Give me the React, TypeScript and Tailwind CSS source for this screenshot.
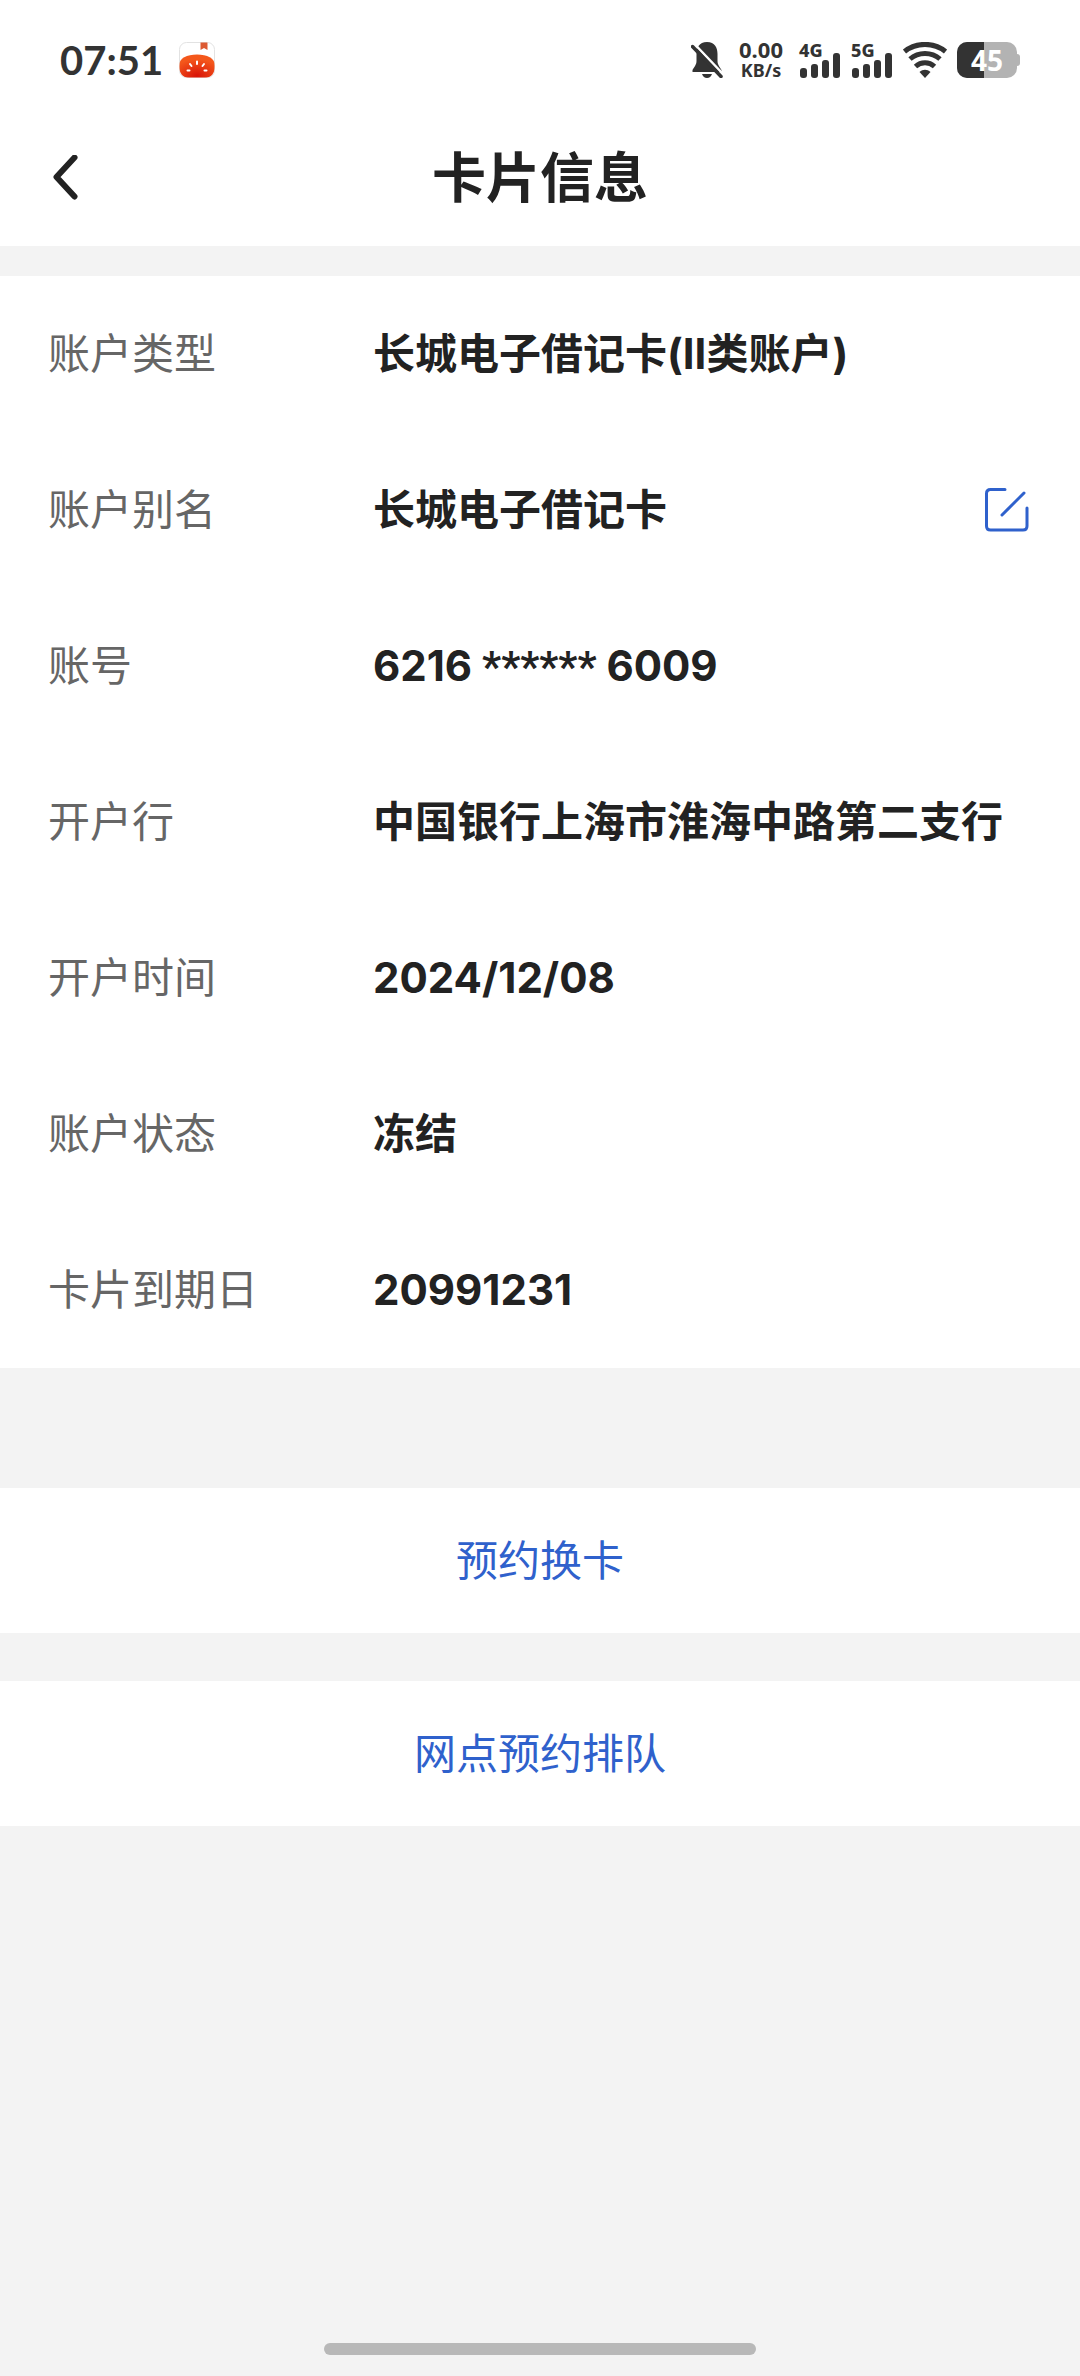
import React from 'react';

interface InfoRow {
  label: string;
  value: React.ReactNode;
  editable?: boolean;
}

const rows: InfoRow[] = [
  { label: '账户类型', value: '长城电子借记卡(II类账户)' },
  { label: '账户别名', value: '长城电子借记卡', editable: true },
  {
    label: '账号',
    value: (
      <span>
        6216 <span className="font-['Roboto',sans-serif] leading-none">******</span> 6009
      </span>
    ),
  },
  { label: '开户行', value: '中国银行上海市淮海中路第二支行' },
  { label: '开户时间', value: '2024/12/08' },
  { label: '账户状态', value: '冻结' },
  { label: '卡片到期日', value: '20991231' },
];

const TomatoIcon: React.FC = () => (
  <svg className="w-9 h-9" viewBox="0 0 36 36">
    <defs>
      <clipPath id="tomato-clip">
        <rect x="0.5" y="0.5" width="35" height="35" rx="7" />
      </clipPath>
      <radialGradient id="tomato-fill" cx="0.5" cy="0.9" r="0.7">
        <stop offset="0" stopColor="#d81408" />
        <stop offset="1" stopColor="#f4571b" />
      </radialGradient>
    </defs>
    <rect x="0.5" y="0.5" width="35" height="35" rx="7" fill="#fff" stroke="#e2e2e2" />
    <g clipPath="url(#tomato-clip)">
      <path d="M0 24 C0 16 8 12.500 18 12.500 S36 16 36 24 C36 31 32 36 26 36 H10 C4 36 0 31 0 24Z" fill="url(#tomato-fill)" />
      <path d="M21.500 0 h7 v8 l-3.500 -2 l-3.500 2z" fill="#dc5a32" />
    </g>
    <path
      d="M18 19.500 v2.500 M11 22 l1.500 2 M25 22 l-1.500 2 M8.500 28.500 h2 M25.500 28.500 h2"
      stroke="#fff"
      strokeWidth="2"
      strokeLinecap="round"
    />
  </svg>
);

const BellOffIcon: React.FC = () => (
  <svg className="w-8 h-9" viewBox="0 0 32 36" fill="#333">
    <path d="M16 0 C8 0 5.500 6 5.500 12 V19 C5.500 23 3 25 1.500 28 V30 H30.500 V28 C29 25 26.500 23 26.500 19 V12 C26.500 6 24 0 16 0Z" />
    <path d="M11 32 H21 C20 34.500 18.500 36 16 36 S12 34.500 11 32Z" />
    <path d="M3.500 2 L33 33" stroke="#fff" strokeWidth="2.500" />
    <path d="M1.500 4.500 L30 34.500" stroke="#333" strokeWidth="3.500" strokeLinecap="round" />
  </svg>
);

const SignalIcon: React.FC<{ network: string }> = ({ network }) => (
  <div className="relative w-[42px] h-9">
    <span className="absolute left-0 top-0 text-lg leading-4 font-extrabold">{network}</span>
    <svg className="w-full h-full" viewBox="0 0 42 36" fill="#333">
      <rect x="1" y="26" width="7" height="10" rx="3" />
      <rect x="12" y="22" width="7" height="14" rx="3" />
      <rect x="23" y="18" width="7" height="18" rx="3" />
      <rect x="34" y="11" width="7" height="25" rx="3" />
    </svg>
  </div>
);

const WifiIcon: React.FC = () => (
  <svg className="w-11 h-9" viewBox="0 0 44 36" fill="none" stroke="#333" strokeWidth="5">
    <path d="M1.500 9.500 C13 0 31 0 42.500 9.500" />
    <path d="M7 17 C15.500 9.500 28.500 9.500 37 17" />
    <path d="M12.500 24.500 C18 19.500 26 19.500 31.500 24.500" />
    <path d="M16.500 30 C20 27 24 27 27.500 30 L22 36Z" fill="#333" stroke="none" />
  </svg>
);

const Battery: React.FC<{ level: number }> = ({ level }) => (
  <div className="flex items-center">
    <div className="relative w-[60px] h-9 rounded-[10px] overflow-hidden bg-[#b3b3b3]">
      <div className="h-full bg-[#333]" style={{ width: `${level}%` }} />
      <span className="absolute inset-0 flex items-center justify-center text-[28px] leading-9 font-bold text-white">
        {level}
      </span>
    </div>
    <div className="w-[3px] h-3 rounded-r-[3px] bg-[#b3b3b3]" />
  </div>
);

const StatusBar: React.FC = () => (
  <div className="flex items-center justify-between h-28 pt-2 px-[60px] text-[#333] font-['Noto_Sans',sans-serif]">
    <div className="flex items-center gap-4">
      <span className="text-[40px] leading-9 font-bold font-['Lato',sans-serif]">07:51</span>
      <TomatoIcon />
    </div>
    <div className="flex items-center gap-[10px]">
      <BellOffIcon />
      <div className="w-12 mx-1 flex flex-col items-center text-lg leading-[21px] font-bold">
        <span className="text-[22px]">0.00</span>
        <span>KB/s</span>
      </div>
      <SignalIcon network="4G" />
      <SignalIcon network="5G" />
      <WifiIcon />
      <Battery level={45} />
    </div>
  </div>
);

const ActionButton: React.FC<{ children: React.ReactNode }> = ({ children }) => (
  <button type="button" className="w-full h-[145px] bg-white text-[42px] text-[#2f61cc]">
    {children}
  </button>
);

export default function App() {
  return (
    <div className="min-h-screen flex flex-col bg-[#f3f3f3] text-[#222] font-['Inter','Noto_Sans_CJK_SC',sans-serif]">
      <div className="bg-white">
        <StatusBar />
        <header className="grid grid-cols-[1fr_auto_1fr] items-center h-[134px] px-12">
          <button type="button" aria-label="返回" className="w-9 h-12">
            <svg className="w-full h-full" viewBox="0 0 36 48" fill="none" stroke="#222" strokeWidth="6" strokeLinecap="round" strokeLinejoin="round">
              <path d="M26.500 2.500 L8.500 22 L26.500 41.500" />
            </svg>
          </button>
          <h1 className="text-[54px] leading-[72px] font-bold">卡片信息</h1>
        </header>
      </div>

      {/* Card details */}
      <dl className="mt-[30px] bg-white">
        {rows.map((row) => (
          <div key={row.label} className="flex items-center h-[156px] px-12 text-[42px] leading-[60px]">
            <dt className="w-[325px] shrink-0 text-[#666]">{row.label}</dt>
            <dd className="flex-1 flex items-center justify-between font-bold">
              {row.value}
              {row.editable && (
                <button type="button" aria-label="编辑" className="w-12 h-12">
                  <svg className="w-full h-full" viewBox="0 0 48 48" fill="none" stroke="#2f61cc" strokeWidth="3" strokeLinecap="round" strokeLinejoin="round">
                    <path d="M21 3.500 H6.500 Q2.500 3.500 2.500 7.500 V40 Q2.500 44 6.500 44 H39 Q43 44 43 40 V22" />
                    <path d="M18 29 L40 7" />
                  </svg>
                </button>
              )}
            </dd>
          </div>
        ))}
      </dl>

      {/* Actions */}
      <div className="mt-[120px] flex flex-col gap-12">
        <ActionButton>预约换卡</ActionButton>
        <ActionButton>网点预约排队</ActionButton>
      </div>

      {/* Home indicator */}
      <div className="mt-auto mb-[21px] w-2/5 h-3 self-center rounded-full bg-[#b8b8b8]" />
    </div>
  );
}
